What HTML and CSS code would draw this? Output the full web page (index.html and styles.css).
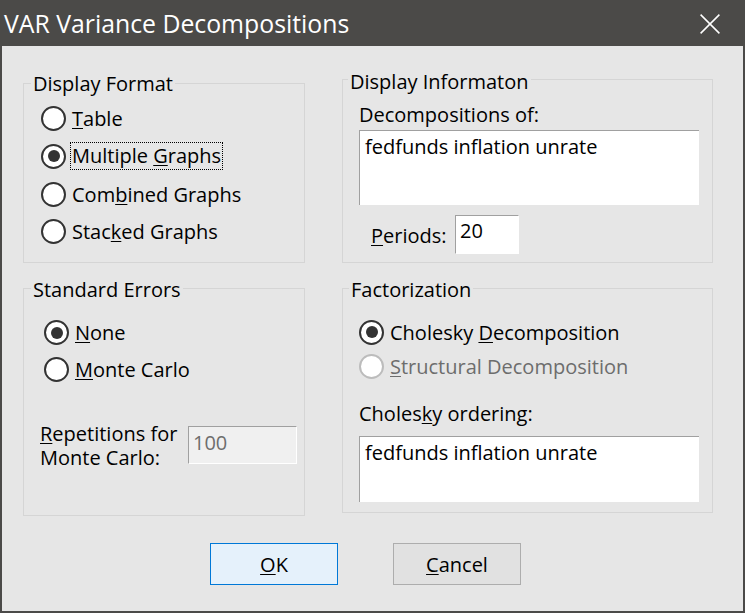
FILE: index.html
```html
<!DOCTYPE html>
<html>
<head>
<meta charset="utf-8">
<title>VAR Variance Decompositions</title>
<link rel="stylesheet" href="styles.css">
</head>
<body>
<div class="window">
  <div class="titlebar">
    <span class="title">VAR Variance Decompositions</span>
    <svg class="close" width="20" height="20" viewBox="0 0 20 20"><path d="M0.6 0.6 L19.4 19.4 M19.4 0.6 L0.6 19.4" stroke="#ffffff" stroke-width="1.5" fill="none"/></svg>
  </div>
  <div class="client">
    <div class="columns">
      <div class="col col-left">
        <div class="group g-format">
          <div class="legend">Display Format</div>
          <div class="radios r-format">
            <div class="radio-row"><span class="radio"></span><span class="rlabel"><u>T</u>able</span></div>
            <div class="radio-row"><span class="radio checked"></span><span class="rlabel focus">Multiple <u>G</u>raphs</span></div>
            <div class="radio-row"><span class="radio"></span><span class="rlabel">Com<u>b</u>ined Graphs</span></div>
            <div class="radio-row"><span class="radio"></span><span class="rlabel">Stac<u>k</u>ed Graphs</span></div>
          </div>
        </div>
        <div class="group g-se">
          <div class="legend">Standard Errors</div>
          <div class="radios r-se">
            <div class="radio-row"><span class="radio checked"></span><span class="rlabel"><u>N</u>one</span></div>
            <div class="radio-row"><span class="radio"></span><span class="rlabel"><u>M</u>onte Carlo</span></div>
          </div>
          <div class="rep-row">
            <div class="rep-label"><span class="rep-line"><u>R</u>epetitions for</span><span class="rep-line">Monte Carlo:</span></div>
            <div class="field rep-field">100</div>
          </div>
        </div>
      </div>
      <div class="col col-right">
        <div class="group g-info">
          <div class="legend">Display Informaton</div>
          <div class="flabel f-decomp">Decompositions of:</div>
          <div class="textbox tb-decomp">fedfunds inflation unrate</div>
          <div class="periods-row">
            <span class="periods-label"><u>P</u>eriods:</span>
            <div class="field periods-field">20</div>
          </div>
        </div>
        <div class="group g-fact">
          <div class="legend">Factorization</div>
          <div class="radios r-fact">
            <div class="radio-row"><span class="radio checked"></span><span class="rlabel">Cholesky <u>D</u>ecomposition</span></div>
            <div class="radio-row"><span class="radio disabled"></span><span class="rlabel disabled"><u>S</u>tructural Decomposition</span></div>
          </div>
          <div class="flabel f-order">Choles<u>k</u>y ordering:</div>
          <div class="textbox tb-order">fedfunds inflation unrate</div>
        </div>
      </div>
    </div>
    <div class="buttons">
      <button class="btn btn-default"><u>O</u>K</button>
      <button class="btn"><u>C</u>ancel</button>
    </div>
  </div>
</div>
</body>
</html>
```
FILE: styles.css
```css
* { box-sizing: border-box; }
html, body { margin: 0; padding: 0; }
body {
  width: 745px;
  height: 613px;
  overflow: hidden;
  font-family: "Open Sans", "Noto Sans", sans-serif;
  font-size: 20px;
  color: #000;
  background: #4b4a48;
}
u {
  text-decoration: underline;
  text-decoration-thickness: 1px;
  text-underline-offset: 2px;
}
.window {
  width: 745px;
  height: 613px;
  background: #4b4a48;
  display: flex;
  flex-direction: column;
}
.titlebar {
  height: 46px;
  flex: none;
  display: flex;
  align-items: center;
  justify-content: space-between;
  padding: 0 25px 0 4px;
  color: #fff;
}
.title {
  font-size: 24.8px;
  line-height: 46px;
}
.close {
  display: block;
  margin-top: 2px;
}
.client {
  flex: 1;
  margin: 0 2px 2px;
  background: #e6e6e6;
}
.columns {
  display: flex;
  gap: 37px;
  padding-left: 21px;
  height: 470px;
}
.col {
  display: flex;
  flex-direction: column;
}
.col-left { width: 282px; }
.col-right { width: 371px; }
.group {
  border: 1px solid #d5d5d5;
  display: flex;
  flex-direction: column;
  align-items: flex-start;
}
.g-format { margin-top: 37px; height: 180px; }
.g-se { margin-top: 25px; height: 228px; }
.g-info { margin-top: 33px; height: 184px; }
.g-fact { margin-top: 25px; height: 225px; }

.legend {
  background: #e6e6e6;
  padding: 0 2px;
  line-height: 26px;
}
.g-format .legend { margin: -13px 0 0 7px; }
.g-se .legend { margin: -12px 0 0 7px; }
.g-info .legend { margin: -11px 0 0 5px; }
.g-fact .legend { margin: -12px 0 0 6px; }

.radio-row {
  display: flex;
  align-items: center;
}
.r-format { margin: 3px 0 0 17px; }
.r-format .radio-row { height: 37.67px; }
.r-se { margin: 11px 0 0 20px; }
.r-se .radio-row { height: 37px; }
.r-fact { margin: 12px 0 0 16px; }
.r-fact .radio-row { height: 34px; }

.radio {
  flex: none;
  width: 25px;
  height: 25px;
  border: 2px solid #333;
  border-radius: 50%;
  background: #fff;
  display: grid;
  place-items: center;
}
.radio.checked::after {
  content: "";
  width: 12px;
  height: 12px;
  border-radius: 50%;
  background: #333;
}
.radio.disabled { border-color: #bcbcbc; }
.rlabel {
  margin-left: 4px;
  padding: 1px 1px 0;
  border: 1px solid transparent;
  line-height: 24px;
  white-space: nowrap;
}
.rlabel.focus { border: 1px dotted #000; padding: 0 1px 1px; line-height: 25px; }
.rlabel.disabled { color: #6d6d6d; }

.rep-row {
  display: flex;
  align-items: flex-start;
  margin: 34px 0 0 16px;
}
.rep-label {
  width: 148px;
  display: flex;
  flex-direction: column;
}
.rep-line {
  display: block;
  height: 24px;
  line-height: 24px;
  white-space: nowrap;
}
.field {
  line-height: 26px;
  border: 1px solid;
  border-color: #a0a0a0 #ffffff #ffffff #a0a0a0;
}
.rep-field {
  margin-top: 4px;
  width: 109px;
  height: 38px;
  padding: 3px 0 0 4px;
  background: #f0f0f0;
  color: #6d6d6d;
}

.flabel { line-height: 26px; white-space: nowrap; }
.f-decomp { margin: 7px 0 0 16px; }
.f-order { margin: 18px 0 0 16px; }
.textbox {
  background: #fff;
  border-style: solid;
  border-width: 1px 0 0 1px;
  border-color: #a0a0a0;
  width: 340px;
  padding: 2.5px 0 0 5px;
  line-height: 26px;
}
.tb-decomp { margin: 2px 0 0 16px; height: 75px; }
.tb-order { margin: 9px 0 0 16px; height: 66px; }

.periods-row {
  display: flex;
  align-items: center;
  margin: 10px 0 0 28px;
}
.periods-label {
  width: 84px;
  line-height: 26px;
  padding-top: 2px;
}
.periods-field {
  width: 64px;
  height: 39px;
  padding: 2px 0 0 4px;
  background: #fff;
}

.buttons {
  display: flex;
  gap: 55px;
  padding-left: 208px;
  margin-top: 27px;
}
.btn {
  width: 128px;
  height: 42px;
  padding: 1px 0 0;
  margin: 0;
  font: inherit;
  line-height: 26px;
  color: #000;
  display: flex;
  align-items: center;
  justify-content: center;
  border: 1px solid #adadad;
  background: #e1e1e1;
}
.btn-default {
  border-color: #0078d7;
  background: #e5f1fb;
}
```
